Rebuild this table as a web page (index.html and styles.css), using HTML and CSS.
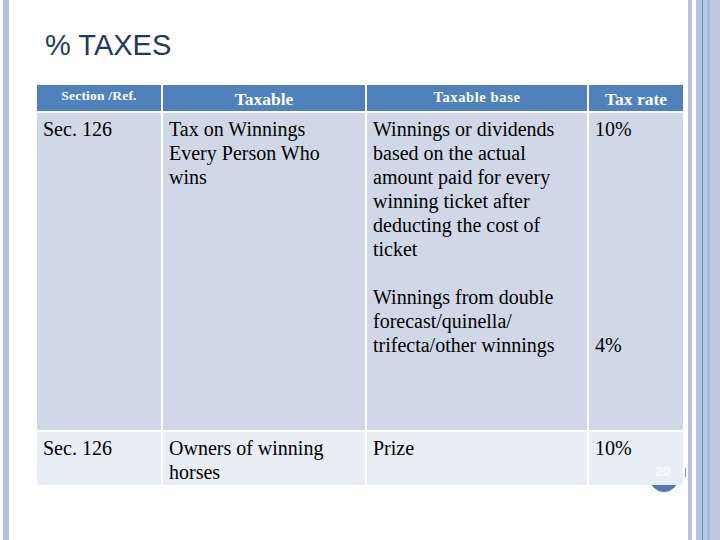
FILE: index.html
```html
<!DOCTYPE html>
<html>
<head>
<meta charset="utf-8">
<link rel="stylesheet" href="styles.css">
</head>
<body>
<div class="slide">
  <div class="left-bar"></div>
  <main class="content">
    <h1 class="title">% TAXES</h1>
    <div class="table-wrap">
      <div class="badge-circle"></div>
      <div class="tax-table">
        <div class="th th-section">Section /Ref.</div>
        <div class="th th-taxable">Taxable</div>
        <div class="th th-base">Taxable base</div>
        <div class="th th-rate">Tax rate</div>

        <div class="td row1">Sec. 126</div>
        <div class="td row1 narrow">Tax on Winnings Every Person Who wins</div>
        <div class="td row1">
          <p class="para">Winnings or dividends based on the actual amount paid for every winning ticket after deducting the cost of ticket</p>
          <p class="para para-gap">Winnings from double forecast/quinella/ trifecta/other winnings</p>
        </div>
        <div class="td row1">
          <p class="para">10%</p>
          <p class="para rate-second">4%</p>
        </div>

        <div class="td row2">Sec. 126</div>
        <div class="td row2 narrow">Owners of winning horses</div>
        <div class="td row2">Prize</div>
        <div class="td row2">10%</div>
      </div>
      <span class="page-num">20</span>
      <span class="page-tick"></span>
    </div>
  </main>
  <div class="right-deco">
    <div class="s s1"></div>
    <div class="s s2"></div>
    <div class="s s3"></div>
    <div class="s s4"></div>
    <div class="s s5"></div>
    <div class="s s6"></div>
    <div class="s s7"></div>
  </div>
</div>
</body>
</html>
```

FILE: styles.css
```css
html, body {
  margin: 0;
  padding: 0;
  background: #ffffff;
}

.slide {
  display: flex;
  width: 720px;
  height: 540px;
  overflow: hidden;
}

.left-bar {
  width: 6px;
  margin-left: 3px;
  background: #b4c2da;
  flex: none;
}

.content {
  flex: 1;
  padding-top: 28px;
}

.title {
  margin: 0 0 23px 36px;
  font-family: "Liberation Sans", Arial, sans-serif;
  font-weight: normal;
  font-size: 29px;
  line-height: 34px;
  color: #1f3a60;
}

.table-wrap {
  position: relative;
  margin-left: 28px;
  width: 646px;
}

.tax-table {
  position: relative;
  z-index: 1;
  display: grid;
  grid-template-columns: 124px 202px 220px 94px;
  grid-template-rows: 26px 317px 53px;
  column-gap: 2px;
  row-gap: 2px;
  font-family: "Liberation Serif", "Times New Roman", serif;
  color: #000;
}

.th {
  background: #4f81bd;
  color: #ffffff;
  font-weight: bold;
  display: flex;
  justify-content: center;
  align-items: center;
  margin-bottom: 2px;
  height: 26px;
  box-sizing: border-box;
}

.th-section {
  font-size: 13.5px;
  letter-spacing: 0.2px;
  padding-bottom: 5px;
}

.th-taxable {
  font-size: 17.5px;
  padding-top: 2px;
}

.th-base {
  font-size: 14.5px;
  letter-spacing: 0.6px;
  padding-bottom: 1px;
}

.th-rate {
  font-size: 17.5px;
  padding-top: 2px;
}

.td {
  font-size: 20px;
  line-height: 24px;
  padding: 4px 6px 0 6px;
}

.narrow {
  padding-right: 36px;
}

.row1 {
  background: #d0d8e8;
}

.row2 {
  background: #e9edf4;
}

.para {
  margin: 0;
}

.para-gap {
  margin-top: 24px;
}

.rate-second {
  margin-top: 192px;
}

.badge-circle {
  position: absolute;
  left: 612px;
  top: 375px;
  width: 30px;
  height: 32px;
  border-radius: 50%;
  background: #5479ae;
  z-index: 0;
}

.page-num {
  position: absolute;
  z-index: 2;
  left: 618px;
  top: 379px;
  font-family: "Liberation Sans", Arial, sans-serif;
  font-weight: bold;
  font-size: 13.5px;
  line-height: 16px;
  color: #f7f9fc;
}

.page-tick {
  position: absolute;
  z-index: 2;
  left: 648px;
  top: 383px;
  width: 1px;
  height: 9px;
  background: #7f8ea8;
}

.right-deco {
  display: flex;
  flex: none;
  width: 32px;
  height: 540px;
}

.s { height: 100%; flex: none; }
.s1 { width: 4px; background: #b8c5dc; }
.s2 { width: 4px; background: #ffffff; }
.s3 { width: 6px; background: #b6c6e2; }
.s4 { width: 1px; background: #6d8dbf; }
.s5 { width: 4px; background: #b5c8e8; }
.s6 { width: 3px; background: #aab9d3; }
.s7 { width: 10px; background: #bcc9e0; }
```
